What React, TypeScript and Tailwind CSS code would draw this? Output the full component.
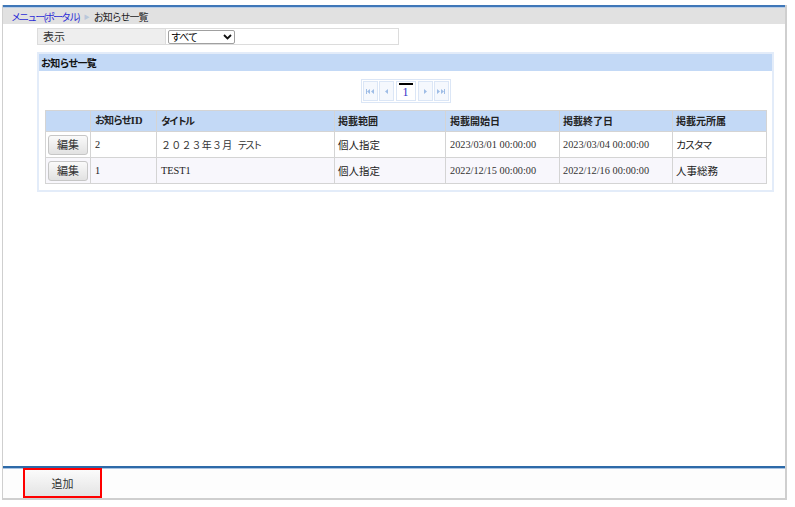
import React from 'react';

interface Notice {
  id: string;
  title: React.ReactNode;
  jpTitle: boolean;
  scope: string;
  start: string;
  end: string;
  dept: string;
  deptTight: boolean;
}

const notices: Notice[] = [
  {
    id: '2',
    title: (
      <>
        <span>２０２３年３月</span>
        <span className="ml-[5px] tracking-[-2.5px]">テスト</span>
      </>
    ),
    jpTitle: true,
    scope: '個人指定',
    start: '2023/03/01 00:00:00',
    end: '2023/03/04 00:00:00',
    dept: 'カスタマ',
    deptTight: true,
  },
  { id: '1', title: 'TEST1', jpTitle: false, scope: '個人指定', start: '2022/12/15 00:00:00', end: '2022/12/16 00:00:00', dept: '人事総務', deptTight: false },
];

const PagerButton: React.FC<{ children: React.ReactNode }> = ({ children }) => (
  <div className="w-[15px] h-[20px] border border-[#dbe6f6] bg-[#f5f8fd] flex items-center justify-center">
    {children}
  </div>
);

const Tri: React.FC<{ dir: 'l' | 'r' }> = ({ dir }) => (
  <svg width="3" height="5" viewBox="0 0 3 5">
    {dir === 'l' ? <path d="M3 0 L0 2.5 L3 5 Z" fill="#9fbde6" /> : <path d="M0 0 L3 2.5 L0 5 Z" fill="#9fbde6" />}
  </svg>
);

const App: React.FC = () => {
  return (
    <div className="w-[795px] h-[507px] bg-white pt-[5px] pl-[2px] font-['Liberation_Serif','Noto_Sans_CJK_JP',serif] text-[11px] text-[#222]">
      <div className="w-[785px] h-[495px] border-l border-r-2 border-b-2 border-[#cfcfcf] flex flex-col">
        {/* header bar */}
        <div className="h-[2px] bg-[#3f77b8]" />
        <div className="h-[17px] bg-[#e1e1e1] border-t border-[#b9cde6] flex items-center pl-[8px] font-['Noto_Sans_CJK_JP',sans-serif] text-[10px]">
          <span className="text-[#2b2bd6] tracking-[-1.9px]">メニュー(ポータル)</span>
          <span className="ml-[5px] mr-[4px] text-[#b9c7da] text-[6px]">▶</span>
          <span className="text-[#222] tracking-[-1px]">お知らせ一覧</span>
        </div>

        <div className="flex-1 pl-[34px] pr-[12px]">
          {/* filter */}
          <div className="mt-[4px] flex w-[362px] h-[17px] border border-[#dcdcdc]">
            <div className="w-[127px] bg-[#eeeeee] pl-[5px] flex items-center font-['Noto_Sans_CJK_JP',sans-serif] text-[11px] text-[#333]">表示</div>
            <div className="flex-1 border-l border-[#dcdcdc] flex items-center pl-[2px]">
              <div className="w-[67px] h-[14px] border border-[#a0a0a0] rounded-[2px] flex items-center justify-between px-[2px] font-['Noto_Sans_CJK_JP',sans-serif] text-[10px] text-black">
                <span className="tracking-[-1px]">すべて</span>
                <svg width="9" height="6" viewBox="0 0 9 6"><path d="M1 1 L4.5 4.5 L8 1" stroke="#111" strokeWidth="1.8" fill="none" /></svg>
              </div>
            </div>
          </div>

          {/* panel */}
          <div className="mt-[7px] w-[737px] border-2 border-[#e3ecf9] pb-[6px]">
            <div className="h-[17px] bg-[#c3d9f6] flex items-center pl-[2px] font-['Noto_Sans_CJK_JP',sans-serif] font-bold text-[10px] text-[#111] tracking-[-0.8px]">お知らせ一覧</div>
            <div className="flex justify-center mt-[8px]">
              <div className="border border-[#dbe6f6] p-[1px] flex gap-[1px] items-center">
                <PagerButton>
                  <svg width="8" height="5" viewBox="0 0 8 5"><path d="M0 0 H1 V5 H0 Z M4 0 L1 2.5 L4 5 Z M8 0 L5 2.5 L8 5 Z" fill="#9fbde6" /></svg>
                </PagerButton>
                <PagerButton><Tri dir="l" /></PagerButton>
                <div className="w-[20px] h-[20px] mx-[1px] border border-[#dbe6f6] bg-white flex flex-col items-center">
                  <div className="w-[14px] h-[1.5px] bg-black mt-[1px]" />
                  <span className="text-[#3232c8] text-[12px] leading-[14px]">1</span>
                </div>
                <PagerButton><Tri dir="r" /></PagerButton>
                <PagerButton>
                  <svg width="8" height="5" viewBox="0 0 8 5"><path d="M0 0 L3 2.5 L0 5 Z M4 0 L7 2.5 L4 5 Z M7 0 H8 V5 H7 Z" fill="#9fbde6" /></svg>
                </PagerButton>
              </div>
            </div>

            <table className="mt-[7px] ml-[6px] w-[721px] border-collapse border border-[#d4d4d4] table-fixed">
              <colgroup>
                <col className="w-[45px]" />
                <col className="w-[66px]" />
                <col className="w-[178px]" />
                <col className="w-[111px]" />
                <col className="w-[114px]" />
                <col className="w-[113px]" />
                <col className="w-[94px]" />
              </colgroup>
              <thead>
                <tr className="h-[21px] bg-[#c3d9f6] text-left font-bold font-['Liberation_Serif','Noto_Sans_CJK_JP',serif] text-[10px]">
                  <th className="border border-[#d4d4d4]" />
                  <th className="border-l border-[#d4d4d4] pl-[4px] font-bold"><span className="tracking-[-1px]">お知らせ</span><span className="text-[10.5px]">ID</span></th>
                  <th className="border-l border-[#d4d4d4] pl-[4px] font-bold tracking-[-2px]">タイトル</th>
                  <th className="border-l border-[#d4d4d4] pl-[3px] font-bold">掲載範囲</th>
                  <th className="border-l border-[#d4d4d4] pl-[4px] font-bold">掲載開始日</th>
                  <th className="border-l border-[#d4d4d4] pl-[3px] font-bold">掲載終了日</th>
                  <th className="border-l border-[#d4d4d4] pl-[3px] font-bold">掲載元所属</th>
                </tr>
              </thead>
              <tbody>
                {notices.map((n, i) => (
                  <tr key={n.id} className={`h-[26px] ${i === 1 ? 'bg-[#f8f7fc]' : 'bg-white'}`}>
                    <td className="border border-[#d4d4d4] pl-[2px]">
                      <button className="w-[40px] h-[20px] rounded-[3px] border border-[#c6c6c6] bg-gradient-to-b from-[#fafafa] to-[#e2e2e2] font-['Noto_Sans_CJK_JP',sans-serif] text-[11px] text-[#333]">編集</button>
                    </td>
                    <td className="border border-[#d4d4d4] pl-[4px] text-[10.3px]">{n.id}</td>
                    <td className={`border border-[#d4d4d4] pl-[4px] ${n.jpTitle ? 'font-["Noto_Sans_CJK_JP",sans-serif] text-[10px] text-[#333] tracking-[0.2px]' : 'text-[10.3px]'}`}>{n.title}</td>
                    <td className="border border-[#d4d4d4] pl-[3px] font-['Noto_Sans_CJK_JP',sans-serif] text-[10.5px]">{n.scope}</td>
                    <td className="border border-[#d4d4d4] pl-[4px] text-[10.3px] text-[#333]">{n.start}</td>
                    <td className="border border-[#d4d4d4] pl-[3px] text-[10.3px] text-[#333]">{n.end}</td>
                    <td className={`border border-[#d4d4d4] pl-[3px] font-['Noto_Sans_CJK_JP',sans-serif] text-[10.5px] ${n.deptTight ? 'tracking-[-1.8px]' : ''}`}>{n.dept}</td>
                  </tr>
                ))}
              </tbody>
            </table>
          </div>
        </div>

        {/* footer */}
        <div className="h-[2px] bg-[#2d6aa8]" />
        <div className="h-[1px] bg-[#a9c3e3]" />
        <div className="h-[29px] bg-[#fdfdfd] pl-[20px]">
          <div className="w-[79px] h-[30px] -mt-[1px] border-2 border-[#ff0000] flex items-stretch">
            <button className="flex-1 bg-gradient-to-b from-[#fbfbfb] to-[#e4e4e4] font-['Noto_Sans_CJK_JP',sans-serif] text-[11px] text-[#333]">追加</button>
          </div>
        </div>
      </div>
    </div>
  );
};

export default App;
